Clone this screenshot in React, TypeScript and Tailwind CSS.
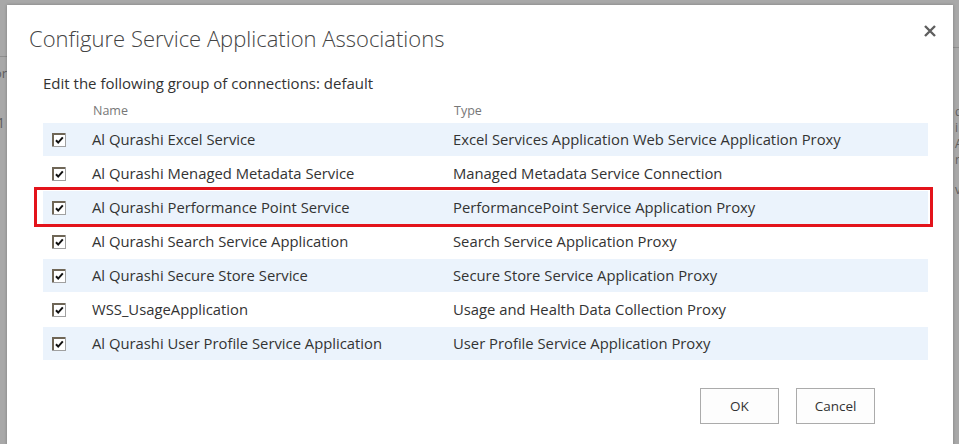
import React from "react";

const rows = [
  ["Al Qurashi Excel Service", "Excel Services Application Web Service Application Proxy"],
  ["Al Qurashi Menaged Metadata Service", "Managed Metadata Service Connection"],
  ["Al Qurashi Performance Point Service", "PerformancePoint Service Application Proxy"],
  ["Al Qurashi Search Service Application", "Search Service Application Proxy"],
  ["Al Qurashi Secure Store Service", "Secure Store Service Application Proxy"],
  ["WSS_UsageApplication", "Usage and Health Data Collection Proxy"],
  ["Al Qurashi User Profile Service Application", "User Profile Service Application Proxy"],
];

function Check() {
  return (
    <svg width="14" height="14" viewBox="0 0 14 14">
      <rect x="0.5" y="0.5" width="13" height="13" fill="#fff" stroke="#a0a0a0" />
      <path d="M1 13V1h12" fill="none" stroke="#6f6656" strokeWidth="2" />
      <path d="M4 7.2l2.2 2.4L10.8 4.4" fill="none" stroke="#111" strokeWidth="2" />
    </svg>
  );
}

export default function App() {
  const font = { fontFamily: '"Open Sans", "Noto Sans", sans-serif' };
  return (
    <div className="relative w-[959px] h-[444px] overflow-hidden bg-[#a8a8a8]" style={font}>
      {/* faint page behind overlay */}
      <div className="absolute left-0 top-[56px] w-[7px] h-px bg-[#8e8e8e]" />
      <div className="absolute left-[953px] top-[47px] w-[6px] h-px bg-[#8e8e8e]" />
      <div className="absolute left-[-6px] top-[64px] text-[13px] leading-[18px] text-[#5d5d5d]">or</div>
      <div className="absolute left-[-3px] top-[114px] text-[14px] leading-[18px] text-[#5d5d5d]">1</div>
      <div className="absolute left-[955px] top-[104px] flex flex-col text-[12px] leading-[16px] text-[#5d5d5d]">
        <span>d</span>
        <span>i</span>
        <span>A</span>
        <span>r</span>
        <span className="mt-[14px]">v</span>
      </div>

      <div className="absolute left-[7px] top-[5px] w-[946px] h-[460px] bg-white shadow-[0_0_3px_rgba(0,0,0,0.25)]">
        <div className="flex items-start justify-between pl-[22px] pr-[16px] pt-[16px]">
          <div className="text-[22px] font-light leading-[34px] text-[#444]">
            Configure Service Application Associations
          </div>
          <svg width="14" height="14" viewBox="0 0 14 14" className="mt-[3px]">
            <path d="M2 2l10 10M12 2L2 12" stroke="#5f5f5f" strokeWidth="2.4" />
          </svg>
        </div>

        <div className="pl-[36px] pr-[25px]">
          <div className="mt-[18px] text-[15px] leading-[20px] text-[#333]">
            Edit the following group of connections: default
          </div>
          <div className="mt-[8px] flex h-[20px] items-center text-[12.5px] text-[#777]">
            <span className="ml-[50px] w-[361px]">Name</span>
            <span>Type</span>
          </div>
          <div className="mt-[2px] flex flex-col gap-px">
            {rows.map(([name, type], i) => (
              <div
                key={name}
                className={`relative flex h-[33px] items-center text-[14.8px] text-[#333] ${
                  i % 2 === 0 ? "bg-[#ebf3fc]" : "bg-white"
                }`}
              >
                <div className="ml-[9px] w-[40px]">
                  <Check />
                </div>
                <span className="w-[361px] whitespace-nowrap">{name}</span>
                <span className="whitespace-nowrap">{type}</span>
                {i === 2 && (
                  <div className="absolute z-10 -left-[9px] -right-[5px] -top-[4px] -bottom-[3px] border-[3px] border-[#e3131b]" />
                )}
              </div>
            ))}
          </div>
          <div className="mt-[28px] flex justify-end gap-[17px] pr-[53px]">
            <button className="h-[36px] w-[79px] border border-[#ababab] bg-[#fdfdfd] text-[13.5px] text-[#333]">
              OK
            </button>
            <button className="h-[36px] w-[79px] border border-[#ababab] bg-[#fdfdfd] text-[13.5px] text-[#333]">
              Cancel
            </button>
          </div>
        </div>
      </div>
    </div>
  );
}
